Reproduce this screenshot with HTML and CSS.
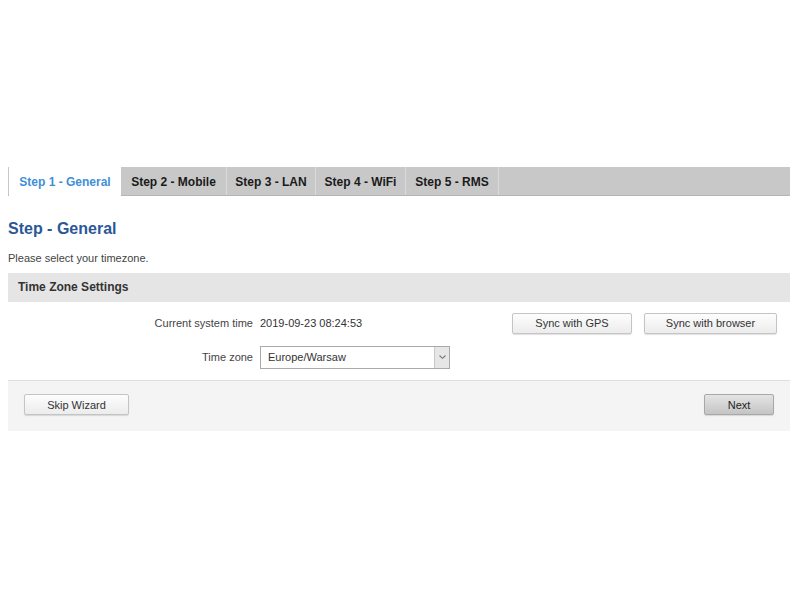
FILE: index.html
```html
<!DOCTYPE html>
<html lang="en">
<head>
  <meta charset="UTF-8">
  <meta name="viewport" content="width=device-width, initial-scale=1.0">
  <title>Configuration Wizard</title>
  <link rel="stylesheet" href="styles.css">
</head>
<body>

<div class="container">
  <ul class="tabs">
    <li class="tab tab-1 active">Step 1 - General</li>
    <li class="tab tab-2">Step 2 - Mobile</li>
    <li class="tab tab-3">Step 3 - LAN</li>
    <li class="tab tab-4">Step 4 - WiFi</li>
    <li class="tab tab-5">Step 5 - RMS</li>
  </ul>

  <h2 class="title">Step - General</h2>
  <p class="desc">Please select your timezone.</p>

  <div class="section">
    <div class="section-head">Time Zone Settings</div>
    <div class="row row-time">
      <label class="label">Current system time</label>
      <div class="value">2019-09-23 08:24:53</div>
      <div class="actions">
        <button class="button sync-gps">Sync with GPS</button>
        <button class="button sync-browser">Sync with browser</button>
      </div>
    </div>
    <div class="row row-zone">
      <label class="label">Time zone</label>
      <div class="select">
        <span>Europe/Warsaw</span>
        <span class="arrow">
          <svg width="9" height="6" viewBox="0 0 9 6"><path d="M1.5 1.5 L4.5 4.3 L7.5 1.5" fill="none" stroke="#777" stroke-width="1.1"/></svg>
        </span>
      </div>
    </div>
  </div>

  <div class="footer">
    <button class="button skip">Skip Wizard</button>
    <button class="button next">Next</button>
  </div>
</div>

</body>
</html>
```

FILE: styles.css
```css
body {
  font-family: "Liberation Sans", Arial, sans-serif;
  font-size: 11px;
  color: #333;
  background-color: #fff;
  margin: 0;
  padding: 0;
}
.container {
  margin: 167px 10px 0 8px;
}
.tabs {
  list-style: none;
  margin: 0;
  padding: 0 0 0 1px;
  display: flex;
  height: 28px;
  background-color: #c8c8c8;
  border-bottom: 1px solid #b5b5b5;
}
.tab {
  height: 28px;
  line-height: 30px;
  text-align: center;
  font-weight: bold;
  font-size: 12px;
  color: #1a1a1a;
  border-right: 1px solid #dadada;
  box-sizing: border-box;
}
.tab-1 { width: 112px; }
.tab-2 { width: 106px; }
.tab-3 { width: 89px; }
.tab-4 { width: 90px; }
.tab-5 { width: 93px; }
.tab.active {
  background-color: #fff;
  color: #3f8fd8;
  height: 29px;
  border-right: none;
}
.title {
  margin: 23px 0 0 0;
  font-size: 16px;
  font-weight: bold;
  color: #2b5797;
  line-height: 20px;
}
.desc {
  margin: 12px 0 0 0;
  font-size: 11px;
  color: #444;
  line-height: 14px;
}
.section {
  margin-top: 8px;
}
.section-head {
  background-color: #e5e5e5;
  height: 29px;
  line-height: 29px;
  padding-left: 10px;
  font-weight: bold;
  font-size: 12px;
  color: #333;
}
.row {
  display: flex;
  align-items: center;
}
.row-time {
  margin-top: 5px;
  height: 32px;
}
.row-zone {
  height: 36px;
}
.label {
  width: 245px;
  text-align: right;
  padding-right: 7px;
  color: #444;
}
.value {
  color: #333;
}
.actions {
  margin-left: auto;
  display: flex;
  gap: 12px;
  padding-right: 13px;
}
.button {
  font-family: "Liberation Sans", Arial, sans-serif;
  font-size: 11px;
  color: #333;
  height: 21px;
  border: 1px solid #c4c4c4;
  border-radius: 2px;
  background: linear-gradient(#fdfdfd, #ececec);
  box-shadow: 0 1px 1px rgba(0, 0, 0, 0.12);
  padding: 0;
  cursor: pointer;
}
.sync-gps {
  width: 120px;
}
.sync-browser {
  width: 133px;
}
.select {
  width: 190px;
  height: 23px;
  border: 1px solid #a9a9a9;
  display: flex;
  align-items: center;
  box-sizing: border-box;
  padding-left: 7px;
  color: #333;
}
.select span:first-child {
  flex: 1;
}
.arrow {
  width: 14px;
  height: 21px;
  border-left: 1px solid #c8c8c8;
  background-color: #e6e6e6;
  display: flex;
  align-items: center;
  justify-content: center;
}
.footer {
  margin-top: 5px;
  border-top: 1px solid #dedede;
  background-color: #f4f4f4;
  height: 51px;
  display: flex;
  align-items: flex-start;
  justify-content: space-between;
  padding: 13px 16px 0 16px;
  box-sizing: border-box;
}
.skip {
  width: 105px;
}
.next {
  width: 70px;
  border-color: #a8a8a8;
  background: linear-gradient(#e4e4e4, #c4c4c4);
  color: #222;
}
```
